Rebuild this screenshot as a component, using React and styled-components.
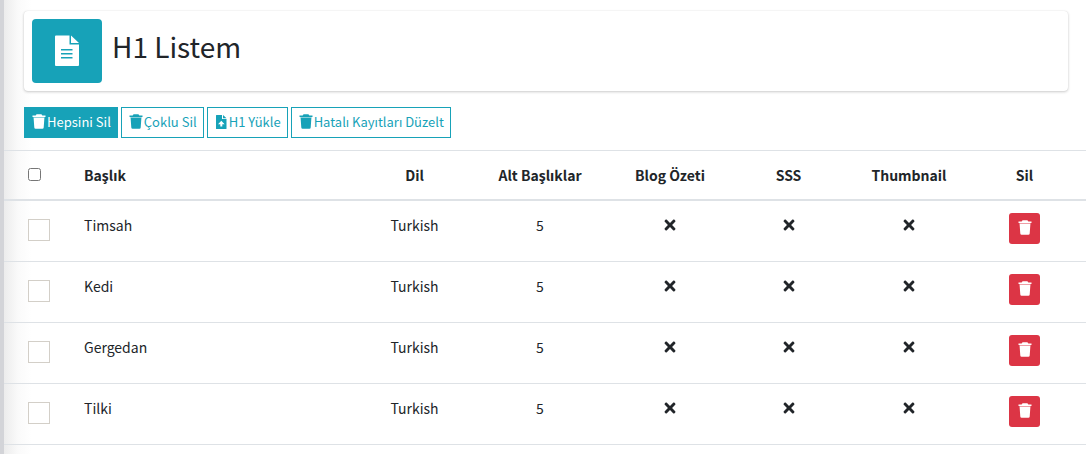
import React, { useState } from "react";
import styled, { createGlobalStyle } from "styled-components";
import { FaTimes } from "react-icons/fa";

const GlobalStyle = createGlobalStyle`
  * {
    box-sizing: border-box;
  }
  body {
    margin: 0;
    background: #fff;
    color: #212529;
    font-family: "Noto Sans CJK SC", "Noto Sans", sans-serif;
    font-size: 14px;
    line-height: 24px;
  }
`;

const Page = styled.div`
  min-height: 100vh;
  border-left: 4px solid #d3d4d8;
  background: linear-gradient(to right, #ececec, #fafafa 14px, #fff 28px);
`;

const Top = styled.header`
  padding: 11px 18px 12px 20px;
`;

const InfoBox = styled.div`
  display: flex;
  gap: 10px;
  padding: 8px;
  margin-bottom: 16px;
  border-radius: 4px;
  background: #fff;
  box-shadow: 0 0 1px rgba(0, 0, 0, 0.125), 0 1px 3px rgba(0, 0, 0, 0.2);
`;

const InfoIcon = styled.span`
  display: flex;
  align-items: center;
  justify-content: center;
  width: 70px;
  height: 64px;
  border-radius: 4px;
  background: #17a2b8;
  color: #fff;
`;

const Title = styled.h1`
  margin: 0;
  font-size: 28px;
  font-weight: 400;
  line-height: 54px;
`;

const Toolbar = styled.div`
  display: flex;
  flex-wrap: wrap;
  gap: 3px;
`;

const ToolButton = styled.button`
  display: flex;
  align-items: center;
  gap: 1px;
  height: 31px;
  padding: 0 6px 2px 7px;
  border: 1px solid #17a2b8;
  background: ${(props) => (props.$filled ? "#17a2b8" : "#fff")};
  color: ${(props) => (props.$filled ? "#fff" : "#17a2b8")};
  font-family: inherit;
  font-size: 13px;
  cursor: pointer;
`;

const Table = styled.table`
  width: 100%;
  table-layout: fixed;
  border-collapse: separate;
  border-spacing: 0;
`;

const Col = styled.col`
  width: ${(props) => props.$width};
`;

const HeadCell = styled.th`
  height: 51px;
  padding: 0 12px;
  border-top: 1px solid #dee2e6;
  border-bottom: 2px solid #dee2e6;
  text-align: ${(props) => props.$align || "center"};
  font-weight: 700;
  &:first-child {
    padding-left: 24px;
  }
  &:last-child {
    padding-right: 24px;
  }
`;

const Cell = styled.td`
  height: 61px;
  padding: 12px;
  border-bottom: 1px solid #dee2e6;
  text-align: ${(props) => props.$align || "center"};
  vertical-align: top;
  &:first-child {
    padding-left: 24px;
  }
  &:last-child {
    padding-right: 24px;
  }
`;

const CheckAll = styled.input`
  display: block;
  margin: 0 0 2px;
`;

const RowCheck = styled.input`
  display: block;
  appearance: none;
  width: 22px;
  height: 22px;
  margin: 6px 0 0;
  border: 1px solid #d3cfc8;
  background: #fff;
  &:checked {
    background: #17a2b8;
  }
`;

const Cross = styled(FaTimes)`
  display: block;
  width: 16px;
  height: 16px;
  margin: 4px auto;
`;

const DeleteButton = styled.button`
  display: inline-flex;
  align-items: center;
  justify-content: center;
  width: 31px;
  height: 31px;
  padding: 0 0 2px;
  border: 0;
  border-radius: 3px;
  background: #dc3545;
  color: #fff;
  vertical-align: top;
  cursor: pointer;
`;

const TrashIcon = () => (
  <svg width="14" height="16" viewBox="0.5 0 14 16" fill="currentColor" aria-hidden="true">
    <path d="M1 1.4h3.2Q4.6.3 5.6.3h3.8q1 0 1.4 1.100H14V3H1z" />
    <path d="M1.9 3h11.200v.8H1.900z" opacity="0.45" />
    <path d="M2.1 3.800h10.800l-.7 9.700a1.300 1.300 0 0 1-1.300 1.200H4.100a1.300 1.300 0 0 1-1.300-1.200z" />
  </svg>
);

const UploadIcon = () => (
  <svg width="13" height="16" viewBox="0 0 13 16" fill="currentColor" aria-hidden="true">
    <path
      fillRule="evenodd"
      d="M1.500 1H7v4h4.500v9.500a.5.5 0 0 1-.5.5H1.500a.5.5 0 0 1-.5-.5v-13a.5.5 0 0 1 .5-.5zM8 1l3.500 3.200H8zM6.300 6.800L3 10.200h2.300v2.300h2v-2.300h2.300z"
    />
  </svg>
);

const DocumentIcon = () => (
  <svg width="24" height="32" viewBox="0 0 24 32" fill="currentColor" aria-hidden="true">
    <path
      fillRule="evenodd"
      d="M1 .5h13.500v9H24V30a1 1 0 0 1-1 1H1a1 1 0 0 1-1-1V1.500a1 1 0 0 1 1-1zM16 .5L24 8h-8zM6 14h11.500v1.600H6zM6 18h11.500v1.600H6zM6 22h11.500v1.600H6z"
    />
  </svg>
);

const rows = [
  { id: 1, title: "Timsah", language: "Turkish", count: 5 },
  { id: 2, title: "Kedi", language: "Turkish", count: 5 },
  { id: 3, title: "Gergedan", language: "Turkish", count: 5 },
  { id: 4, title: "Tilki", language: "Turkish", count: 5 },
];

function App() {
  const [selected, setSelected] = useState([]);

  const toggleAll = () => {
    setSelected(selected.length === rows.length ? [] : rows.map((row) => row.id));
  };
  const toggleRow = (id) => {
    if (selected.includes(id)) {
      setSelected(selected.filter((item) => item !== id));
    } else {
      setSelected([...selected, id]);
    }
  };

  return (
    <>
      <GlobalStyle />
      <Page>
        <Top>
          <InfoBox>
            <InfoIcon>
              <DocumentIcon />
            </InfoIcon>
            <Title>H1 Listem</Title>
          </InfoBox>
          <Toolbar>
            <ToolButton $filled>
              <TrashIcon />
              Hepsini Sil
            </ToolButton>
            <ToolButton>
              <TrashIcon />
              Çoklu Sil
            </ToolButton>
            <ToolButton>
              <UploadIcon />
              H1 Yükle
            </ToolButton>
            <ToolButton>
              <TrashIcon />
              Hatalı Kayıtları Düzelt
            </ToolButton>
          </Toolbar>
        </Top>
        <Table>
          <colgroup>
            <Col $width="68px" />
            <Col />
            <Col $width="11%" />
            <Col $width="132px" />
            <Col $width="128px" />
            <Col $width="109px" />
            <Col $width="132px" />
            <Col $width="111px" />
          </colgroup>
          <thead>
            <tr>
              <HeadCell $align="left">
                <CheckAll
                  type="checkbox"
                  aria-label="Select all"
                  checked={selected.length === rows.length}
                  onChange={toggleAll}
                />
              </HeadCell>
              <HeadCell $align="left">Başlık</HeadCell>
              <HeadCell>Dil</HeadCell>
              <HeadCell>Alt Başlıklar</HeadCell>
              <HeadCell>Blog Özeti</HeadCell>
              <HeadCell>SSS</HeadCell>
              <HeadCell>Thumbnail</HeadCell>
              <HeadCell>Sil</HeadCell>
            </tr>
          </thead>
          <tbody>
            {rows.map((row) => (
              <tr key={row.id}>
                <Cell $align="left">
                  <RowCheck
                    type="checkbox"
                    aria-label={row.title}
                    checked={selected.includes(row.id)}
                    onChange={() => toggleRow(row.id)}
                  />
                </Cell>
                <Cell $align="left">{row.title}</Cell>
                <Cell>{row.language}</Cell>
                <Cell>{row.count}</Cell>
                <Cell>
                  <Cross />
                </Cell>
                <Cell>
                  <Cross />
                </Cell>
                <Cell>
                  <Cross />
                </Cell>
                <Cell>
                  <DeleteButton aria-label="Sil">
                    <TrashIcon />
                  </DeleteButton>
                </Cell>
              </tr>
            ))}
          </tbody>
        </Table>
      </Page>
    </>
  );
}

export default App;
